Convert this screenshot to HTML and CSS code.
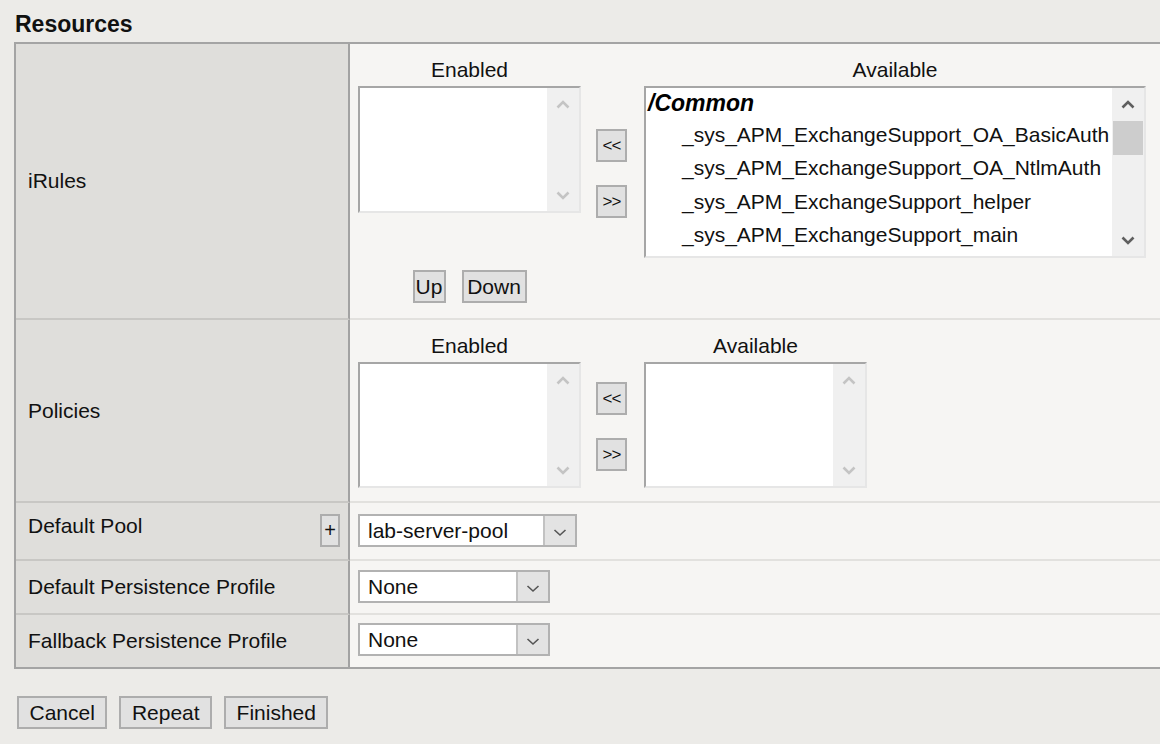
FILE: index.html
```html
<!DOCTYPE html>
<html>
<head>
<meta charset="utf-8">
<link rel="stylesheet" href="styles.css">
</head>
<body>
<div class="page">
  <h2 class="title">Resources</h2>
  <div class="panel">
    <div class="row">
      <div class="label label-center">iRules</div>
      <div class="value value-irules">
        <div class="swap">
          <div class="col col-223">
            <div class="col-head">Enabled</div>
            <div class="listbox lb-h127">
              <div class="lb-body"></div>
              <div class="lb-scroll off">
                <svg class="chev" width="14" height="9" viewBox="0 0 14 9"><polyline points="1.5,7.5 7,2 12.5,7.5"/></svg>
                <svg class="chev" width="14" height="9" viewBox="0 0 14 9"><polyline points="1.5,1.5 7,7 12.5,1.5"/></svg>
              </div>
            </div>
          </div>
          <div class="movers">
            <button class="btn mover">&lt;&lt;</button>
            <button class="btn mover">&gt;&gt;</button>
          </div>
          <div class="col col-502">
            <div class="col-head">Available</div>
            <div class="listbox lb-h172">
              <div class="lb-body">
                <div class="opt-group">/Common</div>
                <div class="opt">_sys_APM_ExchangeSupport_OA_BasicAuth</div>
                <div class="opt">_sys_APM_ExchangeSupport_OA_NtlmAuth</div>
                <div class="opt">_sys_APM_ExchangeSupport_helper</div>
                <div class="opt">_sys_APM_ExchangeSupport_main</div>
                <div class="opt">_sys_APM_MS_Office_OFBA_Support</div>
              </div>
              <div class="lb-scroll on">
                <svg class="chev" width="14" height="9" viewBox="0 0 14 9"><polyline points="1.5,7.5 7,2 12.5,7.5"/></svg>
                <div class="thumb"></div>
                <svg class="chev down-end" width="14" height="9" viewBox="0 0 14 9"><polyline points="1.5,1.5 7,7 12.5,1.5"/></svg>
              </div>
            </div>
          </div>
        </div>
        <div class="updown">
          <button class="btn btn-up">Up</button>
          <button class="btn btn-down">Down</button>
        </div>
      </div>
    </div>

    <div class="row">
      <div class="label label-center">Policies</div>
      <div class="value value-policies">
        <div class="swap">
          <div class="col col-223">
            <div class="col-head">Enabled</div>
            <div class="listbox lb-h126">
              <div class="lb-body"></div>
              <div class="lb-scroll off">
                <svg class="chev" width="14" height="9" viewBox="0 0 14 9"><polyline points="1.5,7.5 7,2 12.5,7.5"/></svg>
                <svg class="chev" width="14" height="9" viewBox="0 0 14 9"><polyline points="1.5,1.5 7,7 12.5,1.5"/></svg>
              </div>
            </div>
          </div>
          <div class="movers">
            <button class="btn mover">&lt;&lt;</button>
            <button class="btn mover">&gt;&gt;</button>
          </div>
          <div class="col col-223">
            <div class="col-head">Available</div>
            <div class="listbox lb-h126">
              <div class="lb-body"></div>
              <div class="lb-scroll off">
                <svg class="chev" width="14" height="9" viewBox="0 0 14 9"><polyline points="1.5,7.5 7,2 12.5,7.5"/></svg>
                <svg class="chev" width="14" height="9" viewBox="0 0 14 9"><polyline points="1.5,1.5 7,7 12.5,1.5"/></svg>
              </div>
            </div>
          </div>
        </div>
      </div>
    </div>

    <div class="row">
      <div class="label label-pool">
        <span>Default Pool</span>
        <button class="btn btn-plus">+</button>
      </div>
      <div class="value value-pool">
        <div class="select sel-219">
          <span class="sel-text">lab-server-pool</span>
          <span class="sel-btn"><svg width="14" height="9" viewBox="0 0 14 9"><polyline points="1.5,2 7,7 12.5,2"/></svg></span>
        </div>
      </div>
    </div>

    <div class="row">
      <div class="label label-center">Default Persistence Profile</div>
      <div class="value value-single">
        <div class="select sel-192">
          <span class="sel-text">None</span>
          <span class="sel-btn"><svg width="14" height="9" viewBox="0 0 14 9"><polyline points="1.5,2 7,7 12.5,2"/></svg></span>
        </div>
      </div>
    </div>

    <div class="row row-last">
      <div class="label label-center">Fallback Persistence Profile</div>
      <div class="value value-last">
        <div class="select sel-192">
          <span class="sel-text">None</span>
          <span class="sel-btn"><svg width="14" height="9" viewBox="0 0 14 9"><polyline points="1.5,2 7,7 12.5,2"/></svg></span>
        </div>
      </div>
    </div>
  </div>

  <div class="actions">
    <button class="btn btn-action">Cancel</button>
    <button class="btn btn-action">Repeat</button>
    <button class="btn btn-action">Finished</button>
  </div>
</div>
</body>
</html>
```

FILE: styles.css
```css
html, body {
  margin: 0;
  padding: 0;
  background: #ecebe8;
}

body {
  font-family: "Liberation Sans", Arial, sans-serif;
  font-size: 21px;
  color: #111;
  overflow: hidden;
}

.page {
  padding-top: 10px;
}

.title {
  margin: 0 0 4px 15px;
  font-size: 23px;
  line-height: 28px;
  font-weight: bold;
  color: #111;
}

.panel {
  margin-left: 14px;
  border-top: 2px solid #a4a4a4;
  border-left: 2px solid #a4a4a4;
  border-bottom: 2px solid #a4a4a4;
}

.row {
  display: grid;
  grid-template-columns: 334px 1fr;
}

.label {
  background: #dfdedb;
  border-right: 2px solid #a2a2a2;
  border-bottom: 2px solid #c8c7c4;
  padding-left: 12px;
  line-height: 24px;
}

.label-center {
  display: flex;
  align-items: center;
}

.label-pool {
  display: flex;
  justify-content: space-between;
  align-items: flex-start;
  padding: 11px 8px 0 12px;
}

.value {
  background: #f6f5f3;
  border-bottom: 2px solid #e2e1de;
  padding-left: 8px;
}

.row-last .label,
.row-last .value {
  border-bottom: none;
}

.value-irules {
  padding-top: 14px;
  padding-bottom: 15px;
}

.value-policies {
  padding-top: 14px;
  padding-bottom: 13px;
}

.value-pool {
  padding-top: 11px;
  padding-bottom: 12px;
}

.value-single {
  padding-top: 9px;
  padding-bottom: 10px;
}

.value-last {
  padding-top: 8px;
  padding-bottom: 11px;
}

.swap {
  display: flex;
  align-items: flex-start;
}

.col-223 { width: 223px; }
.col-502 { width: 502px; }

.col-head {
  text-align: center;
  line-height: 24px;
  margin-bottom: 4px;
}

.movers {
  align-self: center;
  display: flex;
  flex-direction: column;
  gap: 23px;
  margin: 30px 17px 0 15px;
}

.listbox {
  display: flex;
  box-sizing: border-box;
  border-top: 2px solid #a6a6a6;
  border-left: 2px solid #a6a6a6;
  border-right: 2px solid #e6e6e6;
  border-bottom: 2px solid #e6e6e6;
  background: #fff;
  overflow: hidden;
}

.lb-h127 { height: 127px; }
.lb-h126 { height: 126px; }
.lb-h172 { height: 172px; }

.lb-body {
  flex: 1;
  overflow: hidden;
  background: #fff;
}

.lb-scroll {
  width: 32px;
  background: #f0f0f0;
  display: flex;
  flex-direction: column;
  align-items: center;
  padding: 12px 0 11px;
}

.lb-scroll.off {
  justify-content: space-between;
}

.chev {
  display: block;
  fill: none;
  stroke-width: 2.6;
}

.off .chev { stroke: #c4c4c4; }
.on .chev { stroke: #5f5f5f; }

.thumb {
  width: 30px;
  height: 34px;
  background: #cdcdcd;
  margin-top: 12px;
}

.down-end {
  margin-top: auto;
}

.opt-group {
  font-weight: bold;
  font-style: italic;
  font-size: 23px;
  line-height: 30px;
  padding-left: 2px;
  color: #000;
}

.opt {
  line-height: 33.4px;
  padding-left: 36px;
  white-space: nowrap;
  color: #111;
}

.updown {
  width: 223px;
  display: flex;
  justify-content: center;
  gap: 16px;
  margin-top: 12px;
}

.btn {
  font-family: "Liberation Sans", Arial, sans-serif;
  font-size: 21px;
  color: #111;
  background: #e1e1e1;
  border: 2px solid #adadad;
  border-radius: 0;
  height: 33px;
  line-height: 27px;
  padding: 0 10px;
  margin: 0;
  box-sizing: border-box;
}

.mover {
  width: 31px;
  padding: 0;
  font-size: 17px;
  letter-spacing: -1px;
}

.btn-up {
  width: 33px;
  padding: 0;
}

.btn-down {
  width: 65px;
  padding: 0;
}

.btn-plus {
  width: 20px;
  padding: 0;
  font-size: 20px;
}

.select {
  display: flex;
  box-sizing: border-box;
  height: 33px;
  border: 2px solid #b2b2b2;
  background: #fff;
}

.sel-219 { width: 219px; }
.sel-192 { width: 192px; }

.sel-text {
  flex: 1;
  line-height: 29px;
  padding-left: 8px;
  color: #111;
}

.sel-btn {
  width: 32px;
  box-sizing: border-box;
  background: #e3e3e3;
  border-left: 2px solid #c2c2c2;
  display: flex;
  align-items: center;
  justify-content: center;
  padding-top: 3px;
}

.sel-btn svg {
  fill: none;
  stroke: #555;
  stroke-width: 1.6;
}

.actions {
  display: flex;
  gap: 12px;
  margin: 27px 0 0 17px;
}

.btn-action {
  padding: 0 10.5px;
}
```
